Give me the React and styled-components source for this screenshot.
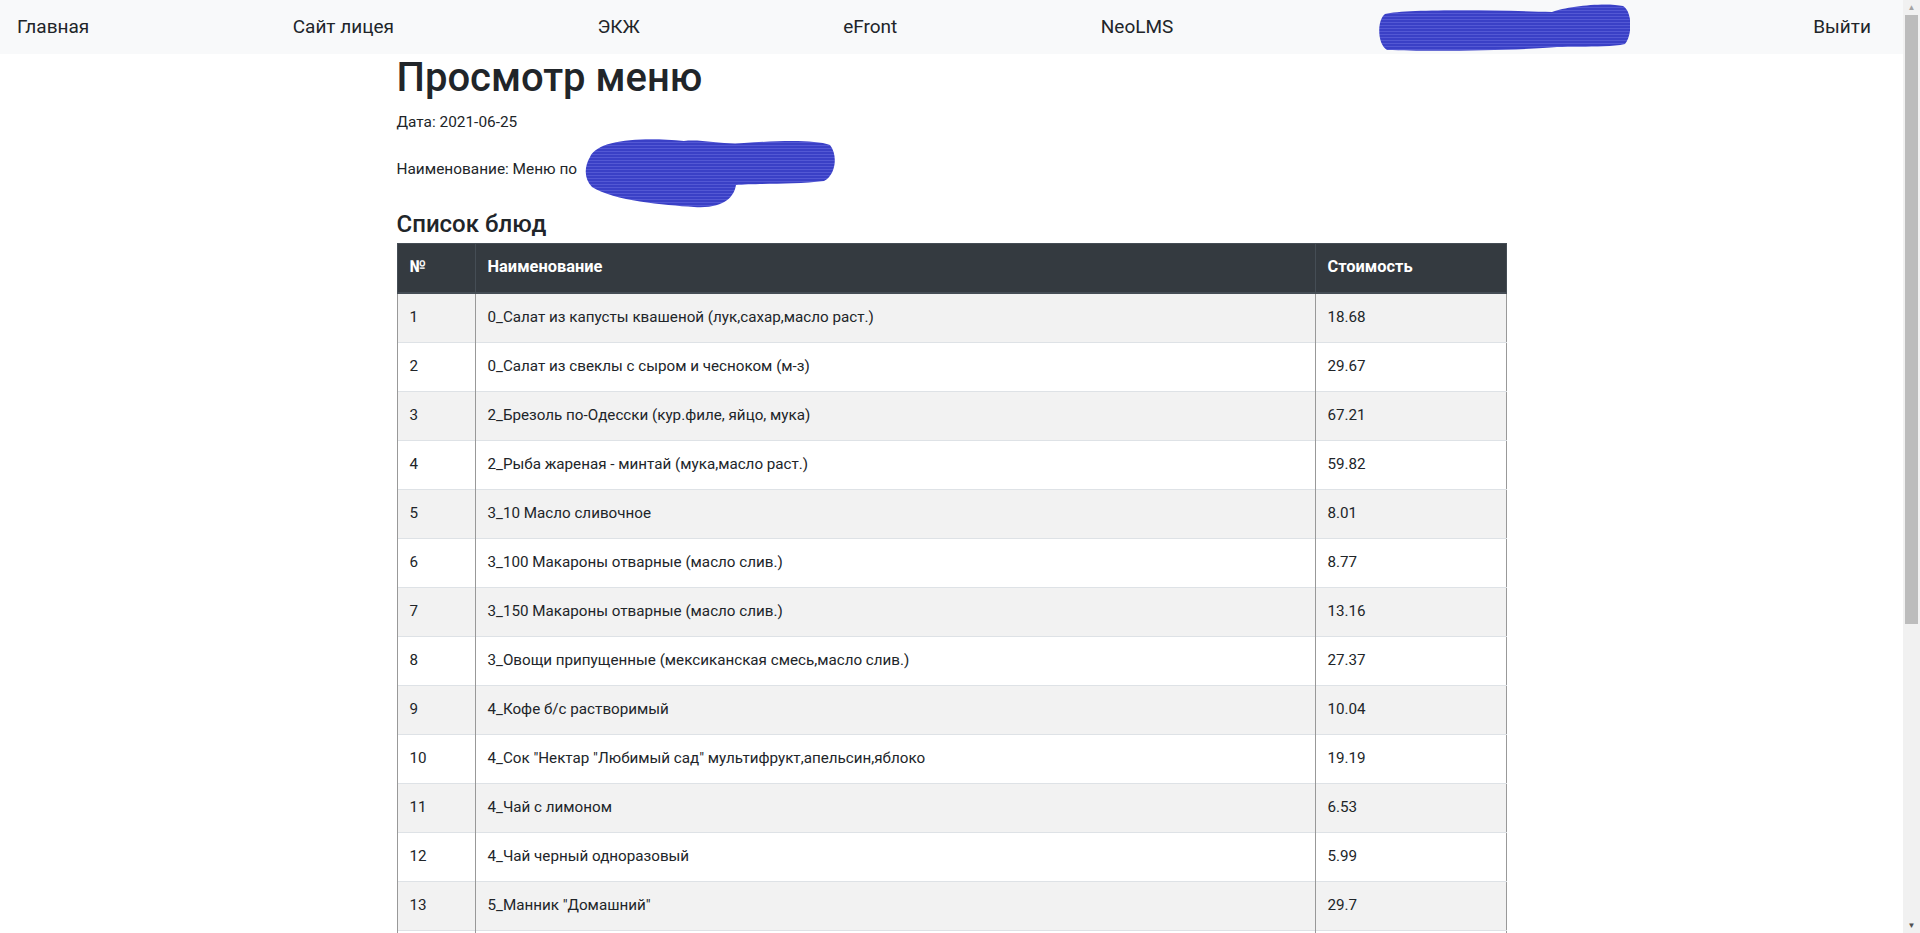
import React from 'react'
import styled, { createGlobalStyle } from 'styled-components'

const GlobalStyle = createGlobalStyle`
    body {
        margin: 0;
        padding-right: 17px;
        font-family: "Segoe UI", Roboto, "Noto Sans", sans-serif;
        font-size: 16px;
        line-height: 1.5;
        color: #212529;
        background: #fff;
    }
`

const Navbar = styled.nav`
    display: flex;
    align-items: center;
    justify-content: space-between;
    height: 54px;
    padding: 0 32px 0 17px;
    background-color: #f8f9fa;
`

const NavLink = styled.a`
    color: #212529;
    font-size: 19px;
    text-decoration: none;
    cursor: pointer;
`

const UserSlot = styled.span`
    display: block;
    width: 253px;
    height: 54px;
    margin-right: -20px;
`

const Container = styled.main`
    max-width: 1110px;
    margin: 0 auto;
    padding: 0 15px;
`

const Title = styled.h1`
    margin: 0 0 8px;
    font-size: 40px;
    font-weight: 500;
    line-height: 1.2;
`

const Text = styled.p`
    margin: 0 0 ${p => p.$gap || 16}px;
    font-size: 15.4px;
    line-height: 24px;
`

const Hidden = styled.span`
    position: relative;
    display: inline-block;
    width: 252px;
    height: 24px;
    margin-left: 3px;
    vertical-align: top;
`

const Subtitle = styled.h4`
    margin: 29px 0 4px;
    font-size: 24px;
    font-weight: 500;
    line-height: 1.2;
`

const Table = styled.table`
    width: 100%;
    border-collapse: collapse;
    font-size: 15.2px;
    border-right: 1px solid #999;
`

const Th = styled.th`
    width: ${p => p.$w || 'auto'};
    padding: 0 12px;
    height: 48px;
    text-align: left;
    font-size: 16.4px;
    font-weight: 700;
    color: #fff;
    background-color: #343a40;
    border: 1px solid #454d55;
    border-bottom-width: 2px;
`

const Row = styled.tr`
    background-color: ${p => (p.$odd ? '#f2f2f2' : '#fff')};
`

const Td = styled.td`
    height: 48px;
    padding: 0 12px;
    border-top: 1px solid #dee2e6;
    border-left: 1px solid #999;
    vertical-align: middle;
`

const Scrollbar = styled.div`
    position: fixed;
    top: 0;
    right: 0;
    bottom: 0;
    width: 17px;
    display: flex;
    flex-direction: column;
    align-items: center;
    background-color: #f1f1f1;
`

const Arrow = styled.div`
    height: 15px;
    display: flex;
    align-items: center;
    justify-content: center;
    color: ${p => p.$color};
    font-size: 8px;
    line-height: 1;
    margin-top: ${p => (p.$bottom ? 'auto' : '0')};
`

const Thumb = styled.div`
    width: 13px;
    height: 609px;
    background-color: #bcbcbc;
`

const Scribble = ({ d, w, h, style }) => (
    <svg width={w} height={h} viewBox={`0 0 ${w} ${h}`} style={style}>
        <defs>
            <pattern id="ink" width="6" height="3" patternUnits="userSpaceOnUse">
                <rect width="6" height="3" fill="#3a40c6" />
                <rect y="1" width="6" height="1" fill="#5358d4" />
            </pattern>
        </defs>
        <path d={d} fill="url(#ink)" />
    </svg>
)

const dishes = [
    ['0_Салат из капусты квашеной (лук,сахар,масло раст.)', '18.68'],
    ['0_Салат из свеклы с сыром и чесноком (м-з)', '29.67'],
    ['2_Брезоль по-Одесски (кур.филе, яйцо, мука)', '67.21'],
    ['2_Рыба жареная - минтай (мука,масло раст.)', '59.82'],
    ['3_10 Масло сливочное', '8.01'],
    ['3_100 Макароны отварные (масло слив.)', '8.77'],
    ['3_150 Макароны отварные (масло слив.)', '13.16'],
    ['3_Овощи припущенные (мексиканская смесь,масло слив.)', '27.37'],
    ['4_Кофе б/с растворимый', '10.04'],
    ['4_Сок "Нектар "Любимый сад" мультифрукт,апельсин,яблоко', '19.19'],
    ['4_Чай с лимоном', '6.53'],
    ['4_Чай черный одноразовый', '5.99'],
    ['5_Манник "Домашний"', '29.7'],
    ['5_Хлеб пшеничный', '2.15'],
    ['5_Хлеб ржаной', '2.05'],
]

const App = () => {
    return (
        <>
            <GlobalStyle />
            <Navbar>
                <NavLink>Главная</NavLink>
                <NavLink>Сайт лицея</NavLink>
                <NavLink>ЭКЖ</NavLink>
                <NavLink>eFront</NavLink>
                <NavLink>NeoLMS</NavLink>
                <UserSlot>
                    <Scribble
                        w={253}
                        h={54}
                        d="M8 14 C30 9 120 10 175 12 C190 6 230 2 246 6 C256 12 255 36 248 44 C230 48 200 46 180 47 C150 50 60 52 10 50 C0 44 0 20 8 14 Z"
                    />
                </UserSlot>
                <NavLink>Выйти</NavLink>
            </Navbar>
            <Container>
                <Title>Просмотр меню</Title>
                <Text $gap={23}>Дата: 2021-06-25</Text>
                <Text>
                    Наименование: Меню по{' '}
                    <Hidden>
                        <Scribble
                            w={252}
                            h={74}
                            style={{ position: 'absolute', left: 0, top: -22 }}
                            d="M6 22 C14 4 60 2 100 6 C118 4 140 10 160 8 C190 6 230 4 246 10 C254 20 252 40 240 46 C210 50 170 48 152 50 C150 62 140 74 110 72 C80 70 30 66 8 52 C0 44 0 32 6 22 Z"
                        />
                    </Hidden>
                </Text>
                <Subtitle>Список блюд</Subtitle>
                <Table>
                    <thead>
                        <tr>
                            <Th $w="53px">№</Th>
                            <Th $w="815px">Наименование</Th>
                            <Th>Стоимость</Th>
                        </tr>
                    </thead>
                    <tbody>
                        {dishes.map(([name, price], i) => (
                            <Row key={i} $odd={i % 2 === 0}>
                                <Td>{i + 1}</Td>
                                <Td>{name}</Td>
                                <Td>{price}</Td>
                            </Row>
                        ))}
                    </tbody>
                </Table>
            </Container>
            <Scrollbar>
                <Arrow $color="#a3a3a3">▲</Arrow>
                <Thumb />
                <Arrow $color="#505050" $bottom>▼</Arrow>
            </Scrollbar>
        </>
    )
}

export default App
